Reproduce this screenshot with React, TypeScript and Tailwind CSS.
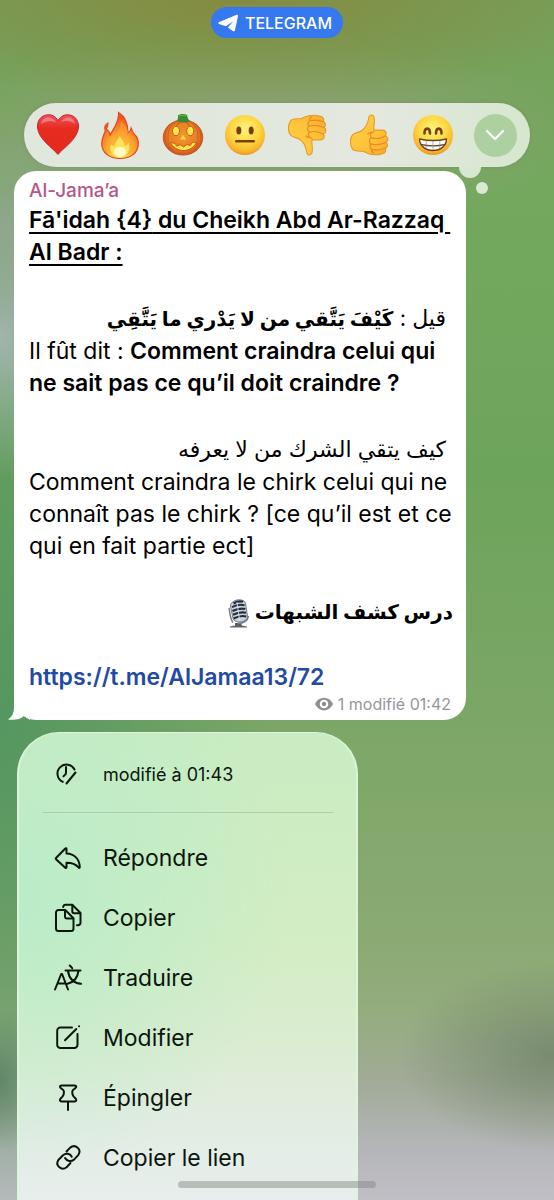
import React from "react";

type IconProps = { children: React.ReactNode };

function Emoji({ label, children }: { label: string; children: React.ReactNode }) {
  return (
    <button type="button" aria-label={label} className="size-[42px] shrink-0">
      <svg viewBox="0 0 42 42" className="size-full overflow-visible">
        {children}
      </svg>
    </button>
  );
}

function Gradients() {
  return (
    <defs>
      <radialGradient id="face" cx="50%" cy="36%" r="66%">
        <stop offset="0" stopColor="#fff380" />
        <stop offset="0.55" stopColor="#fdd63f" />
        <stop offset="0.85" stopColor="#f8b32e" />
        <stop offset="1" stopColor="#ea8c22" />
      </radialGradient>
      <linearGradient id="heart" x1="0" y1="0" x2="0" y2="1">
        <stop offset="0" stopColor="#f0505a" />
        <stop offset="0.35" stopColor="#e62c20" />
        <stop offset="1" stopColor="#e42a1c" />
      </linearGradient>
      <radialGradient id="fire" cx="50%" cy="85%" r="75%">
        <stop offset="0" stopColor="#fff7a0" />
        <stop offset="0.3" stopColor="#fdd045" />
        <stop offset="0.6" stopColor="#f8922a" />
        <stop offset="1" stopColor="#ee5722" />
      </radialGradient>
      <radialGradient id="pumpkin" cx="50%" cy="45%" r="58%">
        <stop offset="0" stopColor="#f39a2d" />
        <stop offset="0.65" stopColor="#ea7c25" />
        <stop offset="1" stopColor="#c54e1c" />
      </radialGradient>
      <linearGradient id="hand" x1="0" y1="0" x2="1" y2="1">
        <stop offset="0" stopColor="#ffd24a" />
        <stop offset="0.6" stopColor="#fdc238" />
        <stop offset="1" stopColor="#f6a92c" />
      </linearGradient>
    </defs>
  );
}

const thumb =
  "M20.2 2.2c1-2 4.400-1.400 5 1.700.8 4.300-.8 8-.3 12.200h8.600c3.500 0 4.900 3.700 2.700 5.700 3.400 1.300 3.500 5.100.9 6.600 2.300 1.800 1.700 5-.8 6 1.300 2.300-.1 4.800-2.700 5.200-4.600 1.400-10.700 1.600-15.200-.4-1.400-.7-2.600-1.500-4-1.800-3.900-.5-9.300.7-11.200-2.600-2.600-4.300-2.300-11.700.9-14.500 2.400-2.100 5.700-1.700 8.500-3.600 3.700-2.500 5.600-6.300 6.500-9.800.6-2 .4-3.500 1.100-4.700z";

function Thumb() {
  return (
    <>
      <path d={thumb} fill="url(#hand)" stroke="#e79a2b" strokeWidth="1.100" />
      <path
        d="M25 17.500c-3.500 1-4.600 4-2.600 6.300-2.500 1.600-2.600 4.700-.4 6.200-1.600 1.800-1.200 4.200.8 5.200-.4 1.600.3 3.300 2 4M22.600 23.600c4 1.600 9.600.5 13.500-1.700M22.200 30c4.600 1.200 10.500.3 14.800-1.500M23 35.300c4.200 1 9 .7 13.200-1M22.500 18.500c-1.500-.2-2.500.3-3.500 1.500"
        fill="none"
        stroke="#e58c25"
        strokeWidth="1.200"
        strokeLinecap="round"
      />
    </>
  );
}

function Reactions() {
  return (
    <div
      aria-label="Réactions"
      className="relative mx-6 mt-[65px] flex h-16 items-center justify-between rounded-full bg-linear-to-r from-[#e0e7dc] via-[#e4e8df] via-70% to-[#d6e7ce] px-[13px] shadow-[0_0_4px_rgba(60,70,60,0.15)]"
    >
      <Emoji label="Cœur">
        <Gradients />
        <path
          d="M21 40.500C16 34 1 25 .5 13 .3 5 5.500.8 11.500.8c4.500 0 8 2.500 9.500 6.200C22.500 3.300 26 .8 30.500.8c6 0 11.200 4.200 11 12.200C41 25 26 34 21 40.500z"
          fill="url(#heart)"
          stroke="#d51c2d"
          strokeWidth="1"
        />
        <path d="M4 10c.6-4 4-6.800 8-6.500 3.300.3 5.600 2 7 5-3.500-1.600-7.500-3-15 1.500zM24 8c2-3.300 4.500-4.500 7.500-4.400 3.600.2 6 3 6.500 6.400-5-3.400-9-4-14-2z" fill="#f8a0aa" opacity=".6" />
      </Emoji>
      <Emoji label="Feu">
        <path
          d="M19.600-1.500c6.500 4 9.400 11.500 9.400 20.500 2.200-1.500 3-3 3.200-5 1.800 4 1.600 5.500 4.300 7.500 1.700 1.600 2.800 5 2.800 8.500C39.300 39 31.500 44.500 21 44.500S3 39 2.700 30C2.500 23.500 5.800 20 6.800 15c2.700 1 4 3.600 4.200 6.500C13.500 15.500 20.500 9 19.600-1.500z"
          fill="url(#fire)"
          stroke="#e7431e"
          strokeWidth="1.200"
        />
        <path d="M9.500 8c.4 3.600-.4 6.400-3.600 8.800-2-3.500-.2-6.600 3.600-8.800z" fill="#ef4f22" />
        <path d="M21.500 7c2 6-5.500 12-6.500 18.500-.6 2.400-3.500 1-4-1.500-2.500 4-5 9 0 14 3 4 17 5.500 22 0 3.600-4 3.500-8 2.500-11.500-1.600 2.600-5 2-5-1 .2-6-2-13-9-18.500z" fill="#fba52e" opacity=".6" />
        <path d="M20.500 22c2 3.500 5.500 6.500 5 10 2.300-.3 3.400-2 4-3.500 1.500 4.500 1 9-2 12-3.500 3-10 3-13.500 0-3-3-3.500-6.500-2-10.500 1 1.600 2 2.200 3.500 2 .4-4 4-6 5-10z" fill="#ffe35c" />
        <ellipse cx="21" cy="38" rx="6" ry="5" fill="#fffbc7" />
      </Emoji>
      <Emoji label="Citrouille">
        <ellipse cx="21" cy="23.500" rx="19.800" ry="17.600" fill="url(#pumpkin)" stroke="#b9491c" strokeWidth=".8" />
        <path d="M15 7C3 13 3 34 14 40M27 7c12 6 12 27 1 33M19 7c-6 4-6.500 10-6.500 15M23 7c6 4 6.500 10 6.500 15M8 10C1 17 2 31 8 36M34 10c7 7 6 21 0 26" fill="none" stroke="#c75a1d" strokeWidth="1.100" opacity=".75" />
        <path d="M15 7c1-2 1.300-3.500.8-5.500 2-1.700 6.500-2 9.300-.5.2 2.600 1.200 4.500 3 6.500-3.500 1.500-9.500 1.700-13.100-.5z" fill="#3c8c2f" />
        <path d="M16.500 2.200c2-1 5.500-1.100 7.800-.3" fill="none" stroke="#78b84d" strokeWidth="1" />
        <ellipse cx="14" cy="17" rx="3.500" ry="4.700" fill="#ffe64c" stroke="#bb4d18" strokeWidth=".8" />
        <ellipse cx="28.200" cy="17" rx="3.500" ry="4.700" fill="#ffe64c" stroke="#bb4d18" strokeWidth=".8" />
        <path d="M21 21l3 4.600h-5.800z" fill="#ffe14a" />
        <path d="M8.500 28.500l4.500 1 1.800 2.700 3.300-1.500 3.500 2.400 3.200-2.600 3.500 1 2-3.100 4-.4c-1.500 4.600-6.500 8.500-12.500 8.500C15.500 36.500 10.500 33 8.500 28.500z" fill="#ffe34c" stroke="#bc4c16" strokeWidth=".8" />
      </Emoji>
      <Emoji label="Neutre">
        <circle cx="21" cy="21" r="20" fill="url(#face)" />
        <ellipse cx="14.800" cy="16.500" rx="2.500" ry="3.900" fill="#774013" />
        <ellipse cx="27.200" cy="16.500" rx="2.500" ry="3.900" fill="#774013" />
        <rect x="11" y="26" width="20" height="2.400" rx="1.200" fill="#774013" />
      </Emoji>
      <Emoji label="Pouce vers le bas">
        <g transform="translate(0 42) scale(1 -1)">
          <Thumb />
        </g>
      </Emoji>
      <Emoji label="Pouce vers le haut">
        <Thumb />
      </Emoji>
      <Emoji label="Sourire">
        <circle cx="21" cy="21" r="20" fill="url(#face)" />
        <path d="M12.500 19.500c0-6.500 5.500-6.500 5.500 0M24 19.500c0-6.500 5.500-6.500 5.500 0" fill="none" stroke="#774013" strokeWidth="2.600" strokeLinecap="round" />
        <path d="M7.500 25c8 1.800 19 1.800 27 0-.2 7-6 11.500-13.500 11.500S7.700 32 7.500 25z" fill="#fff" stroke="#68401c" strokeWidth="1.300" strokeLinejoin="round" />
        <path d="M8.500 30.300c7.500 1.800 17.500 1.800 25 0" fill="none" stroke="#5f4a38" strokeWidth="1.300" />
        <path d="M14.200 26.500v9M21 27v9M27.800 26.500v9" fill="none" stroke="#8a7a6a" strokeWidth=".6" />
      </Emoji>
      <button type="button" aria-label="Plus de réactions" className="flex size-[43px] shrink-0 items-center justify-center rounded-full bg-[#add0a0]">
        <svg viewBox="0 0 20 12" className="h-3 w-5">
          <path d="M2 2l8 8 8-8" fill="none" stroke="#fff" strokeWidth="2.300" strokeLinecap="round" strokeLinejoin="round" />
        </svg>
      </button>
      <span className="absolute top-16 right-[49px] z-10 h-[11px] w-[22px] rounded-b-full bg-[#d8e7d1]" />
      <span className="absolute top-[79px] right-[42px] size-3 rounded-full bg-[#d9e9d2]" />
    </div>
  );
}

function Microphone() {
  return (
    <svg viewBox="0 0 22 30" aria-label="Microphone" className="inline-block h-[30px] w-[22px] align-middle">
      <path d="M7 24h6l1 3H7z" fill="#555b63" />
      <path d="M2 27.500c2-1.500 14-1.500 17 0v1H2z" fill="#62676f" />
      <path d="M1 9c1 5 1 11 4 14.500M20.500 17c-1 5-5 7.500-11 7.500" fill="none" stroke="#777e88" strokeWidth="1.500" />
      <path d="M2.500 7C2 1 15-2 17.500 4l2 13.500c0 6-12.500 8-14.500 2z" fill="#c8d1da" stroke="#59636f" strokeWidth=".8" />
      <path d="M4 8.200c3.500-2 8.500-3 12.500-2M4.500 12c4-2 8.500-3 12.800-2M5 15.800c4-2 9-3 13-2M5.600 19.500c4-2 8.700-3 12.700-2M5.500 4.500C9 2.300 12 2 15 2.800" fill="none" stroke="#232d3c" strokeWidth="2.100" />
      <path d="M9 3l2.500 18" stroke="#e6eaf0" strokeWidth=".8" />
    </svg>
  );
}

function Message() {
  return (
    <article className="relative mt-1 mr-[88px] ml-[14px] rounded-[22px] bg-white pt-2 pr-[13px] pb-[6px] pl-[15px] text-[23px] leading-8 whitespace-nowrap text-black">
      <svg viewBox="0 0 24 24" className="absolute bottom-0 -left-[6px] size-6">
        <path d="M6 0v12c0 5-2 9-6 11.500 7 .8 12 0 16-3.500l6 4V0z" fill="#fff" />
      </svg>
      <div className="relative">
        <h1 className="mb-[2px] text-[19px] leading-[23px] font-medium text-[#b5568b]">Al-Jama’a</h1>
        <p className="font-semibold underline decoration-2 underline-offset-4">
          Fā'idah {"{4}"} du Cheikh Abd Ar-Razzaq&nbsp;
          <br />
          Al Badr :
        </p>
        <p dir="rtl" lang="ar" className="mt-[33px] h-[34px] pr-[7px] text-[22px] leading-[34px]">
          قيل : <b className="text-[20px] font-bold">كَيْفَ يَتَّقي من لا يَدْري ما يَتَّقِي</b>
        </p>
        <p>
          Il fût dit : <b className="font-semibold">Comment craindra celui qui</b>
          <br />
          <b className="font-semibold">ne sait pas ce qu’il doit craindre ?</b>
        </p>
        <p dir="rtl" lang="ar" className="mt-[33px] h-[34px] pr-[7px] text-[22px] leading-[34px]">
          كيف يتقي الشرك من لا يعرفه
        </p>
        <p>
          Comment craindra le chirk celui qui ne
          <br />
          connaît pas le chirk ? [ce qu’il est et ce
          <br />
          qui en fait partie ect]
        </p>
        <p dir="rtl" lang="ar" className="mt-[33px] h-[34px] text-[20px] leading-[34px] font-bold">
          درس كشف الشبهات <Microphone />
        </p>
        <a href="https://t.me/AlJamaa13/72" className="mt-8 block font-semibold text-[#2149a5]">
          https://t.me/AlJamaa13/72
        </a>
        <div className="mt-px flex h-5 items-center justify-end gap-[5px] pr-[2px] text-[16px] text-[#96969a]">
          <svg viewBox="0 0 18 14" className="h-[14px] w-[18px]">
            <path d="M0 7c4-8.500 14-8.500 18 0-4 8.500-14 8.500-18 0z" fill="#8f8f93" />
            <circle cx="9" cy="7" r="4.300" fill="#fff" />
            <circle cx="9" cy="7" r="2.200" fill="#8f8f93" />
          </svg>
          <span>1 modifié 01:42</span>
        </div>
      </div>
    </article>
  );
}

function Icon({ children }: IconProps) {
  return (
    <svg viewBox="0 0 30 30" fill="none" stroke="currentColor" strokeWidth="2" strokeLinecap="round" strokeLinejoin="round" className="size-[30px] shrink-0">
      {children}
    </svg>
  );
}

const items = [
  {
    label: "Répondre",
    icon: <path d="M3 15L12.300 5.500c.6-.5 1.200-.3 1.200.5v4.500c7.800.3 13 5.500 13.300 13.500 0 1-.7 1.200-1.300.4-2.800-3.400-6.600-4.700-12-4.700v4.500c0 .8-.6 1-1.200.5L3 16.200c-.4-.4-.4-.8 0-1.200z" />,
  },
  {
    label: "Copier",
    icon: (
      <>
        <path d="M5.500 7h6.800l8.200 8.200V25.500A2.500 2.500 0 0 1 18 28H5.500A2.500 2.500 0 0 1 3 25.500v-16A2.500 2.500 0 0 1 5.500 7z" />
        <path d="M12 7.500v6a2 2 0 0 0 2 2h6M10.200 4A2.500 2.500 0 0 1 12.700 1.800h6.600l8.200 8.200v9.800A2.500 2.500 0 0 1 25 22.200h-1M19.300 2.200v6a2 2 0 0 0 2 2h6" />
      </>
    ),
  },
  {
    label: "Traduire",
    icon: (
      <>
        <path d="M2 26.500L8.200 11h.9L15 26.500M4.500 20.500h8M16.800 2.500l2.400 2.700M12.500 7.500h15M15 8c1 7 5.500 12 13 12.800M25.500 8c-1 7-5 11.500-11 12.800" />
      </>
    ),
  },
  {
    label: "Modifier",
    icon: (
      <>
        <path d="M19 4.500H7.500A3.200 3.200 0 0 0 4.200 7.700v14A3.200 3.200 0 0 0 7.500 25h13.700a3.200 3.200 0 0 0 3.300-3.300V11" />
        <path d="M12 17.300L23.300 6M26 3.300l.1-.1" />
      </>
    ),
  },
  {
    label: "Épingler",
    icon: (
      <path d="M8.500 2.500h13.200c2 0 2 2 .3 2.900-1.300.8-2.600 1.500-2.700 3-.2 3 .7 5.100 2.900 6.700 1.600 1.200 1.300 3.400-.5 3.400H8.500c-1.800 0-2.100-2.200-.5-3.400 2.200-1.600 3.100-3.700 2.900-6.700-.1-1.500-1.400-2.200-2.700-3C6.500 4.500 6.500 2.500 8.500 2.500zM15 18.500v8.500" />
    ),
  },
  {
    label: "Copier le lien",
    icon: (
      <>
        <path d="M13.500 8.500l3.700-3.900c5.200-4 12 2 8 7.500l-4.200 4.500c-3 2.400-7.200 1.700-9-1.500" />
        <path d="M17.500 20l-3.900 4.200c-5.200 4-12-2-8-7.500l4.400-4.500c3-2.400 7-1.700 8.800 1.500" />
      </>
    ),
  },
];

function Menu() {
  return (
    <nav
      aria-label="Actions du message"
      className="mt-3 mr-[196px] ml-[17px] flex-1 overflow-hidden rounded-t-[42px] border-x-2 border-t border-[#dcf6db]/90 bg-[radial-gradient(ellipse_80%_60%_at_0%_35%,rgba(183,236,201,0.9),rgba(183,236,201,0)),linear-gradient(180deg,#c9ecc2_0%,#d3edc4_45%,#dbecd0_65%,#e2ece2_83%,#e7eeed_100%)] pt-[13px] text-[#0c160d]"
    >
      <div className="flex h-14 items-center gap-5 pl-[34px] text-[18px]">
        <Icon>
          <path d="M21.500 10.500A9 9 0 1 0 9.800 22.800M13 8v6c0 1.200-.8 2-2.500 3.300M13.500 24.500L22.500 13.500" />
        </Icon>
        <span>modifié à 01:43</span>
      </div>
      <hr className="mt-[10px] mr-[23px] mb-[15px] ml-6 border-[#afcbb0]" />
      <ul>
        {items.map((item) => (
          <li key={item.label}>
            <button type="button" className="flex h-[60px] w-full items-center gap-5 pl-[34px] text-left text-[23px]">
              <Icon>{item.icon}</Icon>
              <span>{item.label}</span>
            </button>
          </li>
        ))}
      </ul>
    </nav>
  );
}

export default function App() {
  return (
    <main className="relative flex h-screen flex-col overflow-hidden bg-[radial-gradient(ellipse_30%_10%_at_0%_19%,rgba(150,165,150,0.8),rgba(150,165,150,0)),radial-gradient(ellipse_22%_12%_at_0%_28%,#a3b5af,rgba(163,181,175,0)),radial-gradient(ellipse_70%_9%_at_42%_0%,#858b40,rgba(133,139,64,0)),radial-gradient(ellipse_60%_8%_at_45%_11%,#95a07a,rgba(149,160,122,0)),radial-gradient(ellipse_50%_45%_at_0%_60%,#559660,rgba(85,150,96,0)),radial-gradient(ellipse_28%_8%_at_100%_88%,rgba(112,130,104,0.8),rgba(112,130,104,0)),radial-gradient(ellipse_8%_6%_at_0%_90%,rgba(85,115,95,0.8),rgba(85,115,95,0)),linear-gradient(180deg,#76a05a_0%,#74a85f_15%,#6da45b_40%,#7ca667_60%,#8aaa72_78%,#94ac7e_84%,#a1ab97_90%,#b5b6ba_96%,#c0bfc6_100%)] font-['Inter','Noto_Sans','DejaVu_Sans',sans-serif]">
      <a href="https://t.me/" className="mx-auto mt-[7px] flex h-[31px] shrink-0 items-center gap-[6px] rounded-full bg-[#3578ef] pr-[11px] pl-[7px] text-[16px] font-medium text-white">
        <svg viewBox="0 0 21 18" className="h-[18px] w-[21px]">
          <path d="M.8 8.300L18.500.8c1-.4 1.700.2 1.500 1.300l-3 14.200c-.3 1.200-1.200 1.400-2.200.7l-5-3.500 5.500-6.300-7.500 5L1 10c-1-.4-1-1.200-.2-1.700z" fill="#fff" />
        </svg>
        TELEGRAM
      </a>
      <Reactions />
      <Message />
      <Menu />
      <div className="absolute bottom-3 left-1/2 h-[7px] w-[198px] -translate-x-1/2 rounded-full bg-[#7f857f]/45" />
    </main>
  );
}
